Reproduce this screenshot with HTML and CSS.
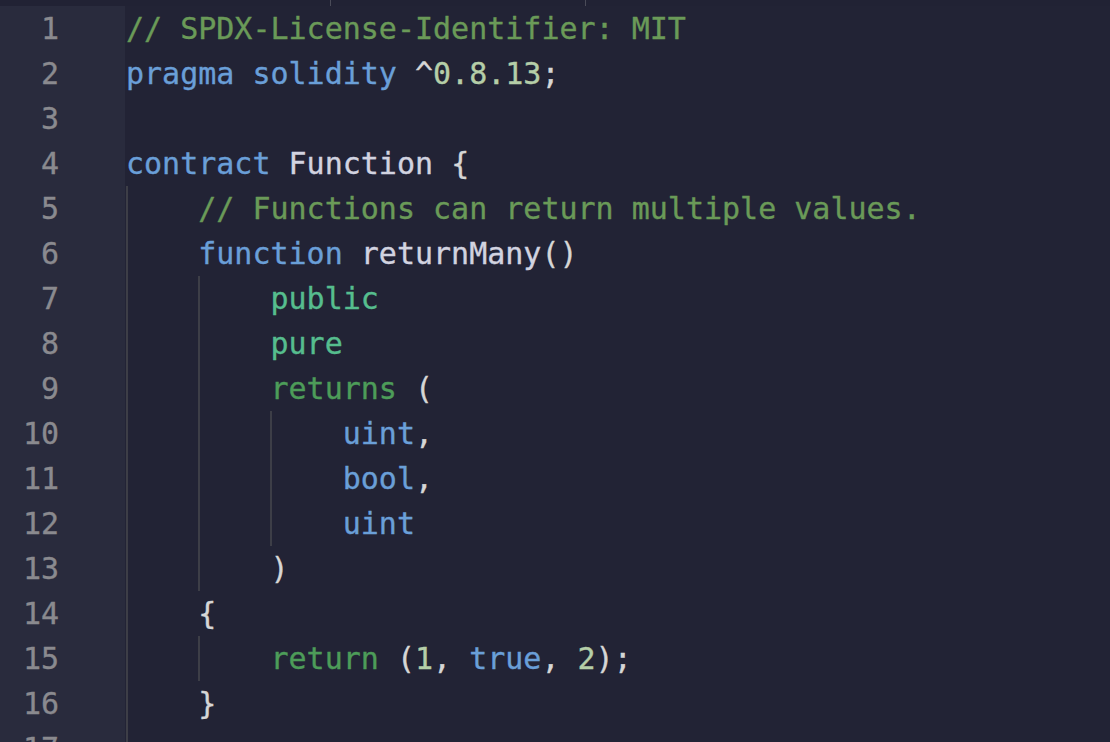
FILE: index.html
```html
<!DOCTYPE html>
<html lang="en">
<head>
<meta charset="utf-8">
<title>Function.sol</title>
<link rel="stylesheet" href="styles.css">
</head>
<body>
<div class="topstrip"><span class="tick t1"></span><span class="tick t2"></span></div>
<div class="editor">
  <div class="gutter">
    <div class="ln">1</div><div class="ln">2</div><div class="ln">3</div><div class="ln">4</div>
    <div class="ln">5</div><div class="ln">6</div><div class="ln">7</div><div class="ln">8</div>
    <div class="ln">9</div><div class="ln">10</div><div class="ln">11</div><div class="ln">12</div>
    <div class="ln">13</div><div class="ln">14</div><div class="ln">15</div><div class="ln">16</div>
    <div class="ln">17</div>
  </div>
  <div class="code">
<div class="line"><span class="cm">// SPDX-License-Identifier: MIT</span></div>
<div class="line"><span class="kw">pragma</span> <span class="kw">solidity</span> <span class="pn">^</span><span class="nu">0.8.13</span><span class="pn">;</span></div>
<div class="line"> </div>
<div class="line"><span class="kw">contract</span> <span class="id">Function</span> <span class="pn">{</span></div>
<div class="line"><span class="ind g"></span><span class="cm">// Functions can return multiple values.</span></div>
<div class="line"><span class="ind g"></span><span class="kw">function</span> <span class="id">returnMany</span><span class="pn">()</span></div>
<div class="line"><span class="ind g"></span><span class="ind g"></span><span class="mod">public</span></div>
<div class="line"><span class="ind g"></span><span class="ind g"></span><span class="mod">pure</span></div>
<div class="line"><span class="ind g"></span><span class="ind g"></span><span class="ret">returns</span> <span class="pn">(</span></div>
<div class="line"><span class="ind g"></span><span class="ind g"></span><span class="ind g"></span><span class="kw">uint</span><span class="pn">,</span></div>
<div class="line"><span class="ind g"></span><span class="ind g"></span><span class="ind g"></span><span class="kw">bool</span><span class="pn">,</span></div>
<div class="line"><span class="ind g"></span><span class="ind g"></span><span class="ind g"></span><span class="kw">uint</span></div>
<div class="line"><span class="ind g"></span><span class="ind g"></span><span class="pn">)</span></div>
<div class="line"><span class="ind g"></span><span class="pn">{</span></div>
<div class="line"><span class="ind g"></span><span class="ind g"></span><span class="ret">return</span> <span class="pn">(</span><span class="nu">1</span><span class="pn">,</span> <span class="kw">true</span><span class="pn">,</span> <span class="nu">2</span><span class="pn">);</span></div>
<div class="line"><span class="ind g"></span><span class="pn">}</span></div>
<div class="line"><span class="ind g"></span></div>
  </div>
</div>
</body>
</html>
```
FILE: styles.css
```css
html, body {
  margin: 0;
  padding: 0;
  height: 742px;
  overflow: hidden;
  background: #222335;
}

.topstrip {
  height: 6px;
  display: flex;
  background: #212234;
}

.tick {
  width: 1px;
  height: 6px;
  background: #4a4b58;
}

.t1 { margin-left: 330px; }
.t2 { margin-left: 254px; }

.editor {
  display: flex;
  font-family: "DejaVu Sans Mono", "Liberation Mono", monospace;
  font-size: 30px;
  line-height: 45px;
  -webkit-text-stroke: 0.35px;
}

.gutter {
  width: 125px;
  flex: none;
  background: #292b3d;
  box-sizing: border-box;
  padding-right: 66px;
  text-align: right;
  color: #8a8a8f;
}

.ln {
  height: 45px;
  white-space: nowrap;
}

.code {
  padding-left: 1px;
  color: #d4d4d8;
  flex: 1;
}

.line {
  height: 45px;
  white-space: pre;
}

.ind {
  display: inline-block;
  width: 4ch;
  height: 45px;
  vertical-align: top;
  box-sizing: border-box;
}

.ind.g {
  border-left: 2px solid #3d3e47;
}

.cm { color: #6a9a58; }
.kw { color: #6a9fd8; }
.id { color: #d2d3e0; }
.pn { color: #d6d6d6; }
.nu { color: #b5cea8; }
.mod { color: #56bd8e; }
.ret { color: #4d9c59; }
```
